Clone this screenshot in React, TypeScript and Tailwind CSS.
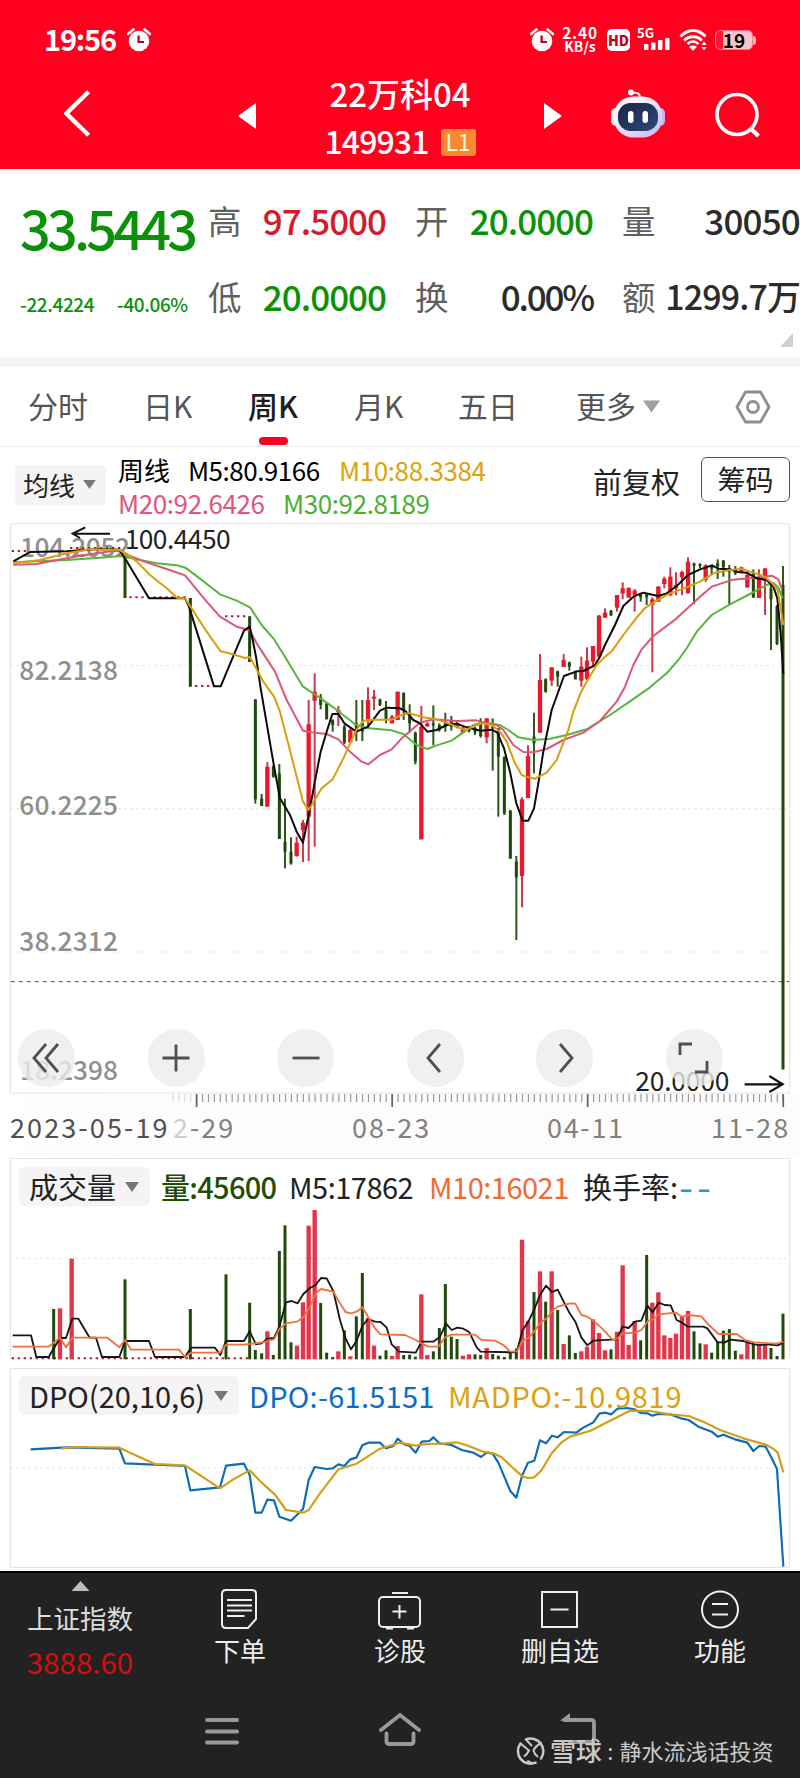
import React from "react";

type Candle = [x: number, high: number, low: number, top: number, bottom: number, up: 0 | 1];
type Bar = [x: number, top: number, up: 0 | 1];

const RED = "#e8182d";
const GREEN = "#1f4a0c";

const candles: Candle[] = [
  [375, 140, 264, 140, 264, 0], [571, 264, 530, 264, 530, 0], [749, 319, 456, 319, 456, 0],
  [766, 568, 881, 568, 868, 0], [785, 852, 888, 866, 888, 0], [802, 756, 890, 770, 890, 1],
  [820, 766, 803, 770, 800, 0], [838, 762, 987, 790, 987, 0], [855, 866, 1075, 995, 1025, 0],
  [873, 982, 1064, 1025, 1060, 0], [890, 980, 1040, 998, 1038, 1], [909, 930, 1056, 938, 960, 1],
  [926, 570, 1053, 643, 920, 1], [944, 490, 1010, 545, 572, 1], [962, 552, 598, 560, 585, 0],
  [980, 580, 628, 580, 628, 0], [998, 628, 665, 630, 645, 0], [1015, 588, 648, 600, 606, 1],
  [1033, 645, 702, 650, 698, 0], [1051, 655, 697, 660, 697, 1], [1069, 570, 693, 640, 665, 0],
  [1087, 570, 693, 640, 665, 0], [1104, 532, 655, 570, 628, 1], [1122, 540, 600, 560, 566, 1],
  [1140, 566, 588, 568, 585, 0], [1158, 573, 640, 600, 630, 0], [1176, 615, 640, 620, 640, 1],
  [1193, 545, 630, 545, 630, 1], [1211, 548, 630, 548, 600, 0], [1229, 583, 668, 610, 640, 0],
  [1246, 665, 763, 668, 755, 0], [1264, 588, 988, 650, 988, 1], [1282, 637, 650, 640, 649, 1],
  [1300, 586, 706, 640, 646, 0], [1318, 640, 665, 645, 660, 0], [1336, 608, 665, 640, 650, 0],
  [1354, 618, 662, 630, 650, 0], [1371, 636, 655, 640, 652, 1], [1389, 650, 668, 655, 668, 1],
  [1407, 648, 667, 650, 664, 0], [1425, 650, 675, 655, 668, 0], [1442, 625, 683, 640, 678, 0],
  [1460, 625, 700, 625, 682, 1], [1478, 625, 782, 650, 655, 0], [1495, 655, 920, 655, 740, 0],
  [1513, 740, 915, 740, 910, 0], [1531, 900, 1046, 902, 1046, 0], [1549, 1038, 1290, 1055, 1102, 0],
  [1566, 862, 1192, 868, 1098, 1], [1584, 706, 864, 738, 864, 1], [1602, 608, 790, 680, 700, 0],
  [1620, 432, 668, 510, 668, 1], [1637, 505, 548, 508, 545, 0], [1655, 472, 528, 472, 512, 1],
  [1673, 482, 530, 484, 500, 0], [1691, 432, 471, 450, 471, 1], [1708, 455, 482, 457, 470, 0],
  [1726, 482, 508, 485, 508, 0], [1744, 440, 530, 470, 512, 1], [1761, 412, 510, 452, 508, 1],
  [1779, 408, 470, 408, 455, 1], [1797, 315, 443, 317, 440, 1], [1815, 295, 323, 308, 323, 1],
  [1833, 300, 318, 302, 316, 0], [1851, 255, 305, 255, 293, 1], [1868, 217, 268, 235, 250, 1],
  [1886, 232, 263, 234, 263, 1], [1904, 237, 305, 242, 255, 1], [1922, 248, 275, 250, 262, 0],
  [1940, 252, 285, 254, 262, 0], [1957, 262, 487, 268, 285, 1], [1975, 228, 275, 230, 275, 1],
  [1993, 200, 235, 206, 222, 1], [2011, 172, 258, 200, 255, 1], [2028, 187, 256, 225, 235, 1],
  [2046, 182, 256, 186, 202, 1], [2064, 142, 250, 155, 250, 1], [2082, 158, 282, 160, 168, 0],
  [2100, 160, 175, 162, 168, 0], [2117, 163, 216, 166, 210, 1], [2135, 165, 192, 166, 176, 0],
  [2153, 148, 207, 160, 170, 0], [2170, 150, 200, 152, 172, 0], [2188, 165, 283, 175, 185, 0],
  [2206, 168, 195, 180, 190, 0], [2224, 170, 190, 172, 184, 1], [2242, 185, 233, 195, 232, 1],
  [2260, 178, 264, 190, 262, 0], [2277, 178, 264, 200, 264, 1], [2295, 175, 315, 175, 212, 1],
  [2313, 225, 420, 235, 268, 0], [2331, 285, 405, 288, 402, 0], [2349, 168, 1678, 225, 1678, 0],
];

const volumes: Bar[] = [
  [161, 477, 0], [180, 475, 1], [215, 326, 1], [375, 388, 0], [571, 477, 0], [678, 373, 0],
  [749, 458, 0], [766, 600, 0], [785, 610, 0], [802, 544, 1], [820, 615, 0], [838, 303, 0],
  [855, 226, 0], [873, 577, 0], [891, 587, 1], [909, 457, 1], [926, 227, 1], [944, 180, 1],
  [962, 459, 0], [980, 608, 0], [998, 621, 0], [1015, 604, 1], [1033, 541, 0], [1051, 619, 1],
  [1069, 499, 0], [1087, 369, 0], [1104, 504, 1], [1122, 587, 1], [1140, 617, 0], [1158, 601, 0],
  [1176, 618, 1], [1193, 588, 1], [1211, 615, 0], [1229, 614, 0], [1246, 620, 0], [1264, 433, 1],
  [1282, 615, 1], [1300, 604, 0], [1318, 534, 0], [1336, 402, 0], [1354, 560, 0], [1371, 567, 0],
  [1389, 617, 1], [1407, 613, 1], [1425, 613, 0], [1442, 615, 0], [1460, 594, 1], [1478, 612, 0],
  [1495, 617, 0], [1513, 621, 0], [1531, 607, 0], [1549, 596, 0], [1566, 269, 1], [1584, 512, 1],
  [1602, 426, 0], [1620, 364, 1], [1637, 455, 0], [1655, 364, 1], [1673, 480, 0], [1691, 582, 1],
  [1708, 556, 0], [1726, 609, 0], [1744, 604, 1], [1761, 590, 1], [1779, 508, 1], [1797, 549, 1],
  [1815, 601, 1], [1833, 598, 0], [1851, 545, 1], [1868, 346, 1], [1886, 585, 1], [1904, 513, 1],
  [1922, 571, 0], [1940, 315, 0], [1957, 458, 1], [1975, 427, 1], [1993, 556, 1], [2011, 564, 1],
  [2028, 551, 1], [2046, 500, 1], [2064, 483, 1], [2082, 544, 0], [2100, 580, 0], [2117, 583, 1],
  [2135, 608, 0], [2153, 575, 0], [2170, 542, 0], [2188, 537, 0], [2206, 602, 0], [2224, 613, 1],
  [2242, 572, 1], [2260, 580, 0], [2277, 585, 1], [2295, 585, 1], [2313, 594, 0], [2331, 618, 0],
  [2349, 491, 0],
];

const ma5 =
  "40,154 90,126 200,124 300,117 358,119 378,150 447,265 555,265 567,290 642,529 662,529 732,362 749,350 757,384 768,440 782,535 800,640 818,745 826,790 840,865 870,915 890,965 909,998 926,915 944,818 962,725 980,665 997,612 1015,611 1033,640 1069,665 1104,650 1140,602 1160,593 1200,595 1218,605 1240,630 1260,640 1282,665 1310,660 1340,645 1370,641 1400,652 1442,662 1475,659 1492,668 1512,715 1530,785 1549,880 1568,932 1585,932 1602,895 1615,820 1630,725 1655,600 1692,498 1730,484 1750,483 1783,467 1800,440 1815,405 1845,345 1870,288 1900,260 1930,248 1975,258 2000,250 2030,228 2064,195 2100,178 2136,166 2155,176 2190,178 2215,186 2240,188 2270,205 2300,210 2320,230 2332,265 2342,370 2350,492";
const ma10 =
  "40,160 120,150 200,130 270,118 358,120 380,132 410,154 450,195 500,235 532,264 555,265 575,295 620,365 662,424 700,433 735,444 749,441 760,460 790,515 822,560 840,605 862,690 890,800 909,875 926,900 944,870 965,835 998,808 1030,745 1069,660 1090,632 1120,629 1175,629 1200,617 1225,609 1270,622 1310,628 1345,640 1375,652 1395,660 1420,650 1445,640 1475,645 1500,665 1520,695 1545,760 1565,795 1585,802 1605,806 1640,788 1670,750 1690,698 1705,660 1720,605 1744,544 1765,507 1790,465 1815,440 1835,424 1870,375 1910,323 1935,294 1970,272 2010,250 2060,232 2100,215 2145,188 2190,180 2225,176 2250,185 2290,198 2315,218 2333,240 2350,345";
const ma20 =
  "40,164 110,162 160,152 240,137 320,125 360,122 390,138 440,157 500,177 555,196 620,275 660,320 710,350 749,361 770,400 825,485 860,570 909,662 935,667 980,672 1015,688 1050,725 1085,755 1105,763 1140,735 1175,718 1205,685 1260,638 1300,628 1370,633 1430,631 1460,640 1490,645 1510,660 1540,705 1570,726 1600,727 1640,717 1690,690 1750,668 1800,633 1850,575 1875,530 1900,465 1925,418 1960,378 2030,325 2100,260 2135,230 2200,209 2280,202 2315,197 2335,208 2345,235";
const ma30 =
  "40,157 200,150 300,143 362,138 420,150 470,160 530,166 556,173 600,206 660,253 710,272 750,292 785,345 820,385 850,432 909,530 950,557 1000,592 1065,643 1100,654 1140,658 1175,661 1210,672 1250,705 1282,717 1310,706 1355,692 1390,667 1420,645 1450,637 1500,645 1525,660 1555,682 1600,690 1650,686 1700,675 1760,658 1830,615 1890,574 1950,532 2000,490 2035,450 2060,415 2090,365 2135,315 2190,283 2250,252 2300,225 2320,219 2335,232 2348,265";

const vol5 =
  "38,556 93,556 109,621 146,621 180,564 198,564 217,506 235,506 269,563 288,563 306,621 358,621 375,573 447,573 465,621 555,621 573,593 645,593 661,615 678,573 732,573 749,544 768,583 785,580 802,566 822,564 838,530 858,457 875,453 893,460 910,432 930,414 947,405 963,384 980,385 1000,423 1020,510 1037,566 1053,598 1070,572 1087,528 1104,507 1125,515 1142,516 1160,533 1175,583 1197,605 1247,608 1265,575 1300,575 1320,560 1338,521 1355,540 1372,533 1390,536 1408,547 1430,592 1442,605 1550,607 1568,540 1585,515 1602,480 1620,435 1638,407 1656,426 1673,419 1691,455 1708,488 1726,515 1744,562 1762,586 1780,572 1850,568 1868,530 1886,534 1904,515 1924,512 1942,467 1958,487 1976,458 1994,465 2012,466 2030,510 2046,518 2064,530 2110,530 2122,535 2153,577 2175,577 2190,569 2230,573 2262,583 2280,585 2300,583 2333,586 2350,578";
const vol10 =
  "38,590 146,590 180,563 198,592 217,563 322,563 358,592 375,570 393,599 537,599 555,621 573,608 660,608 678,584 732,584 790,577 810,570 822,568 838,537 858,520 893,514 910,502 930,470 947,430 963,417 1000,425 1020,460 1037,486 1053,490 1070,485 1087,472 1104,500 1125,535 1142,553 1215,555 1247,570 1265,580 1285,590 1315,590 1335,562 1355,554 1425,554 1445,570 1485,572 1510,585 1530,604 1550,605 1568,572 1585,565 1602,545 1620,520 1640,505 1656,484 1673,470 1710,460 1726,461 1744,495 1762,500 1780,512 1800,530 1818,548 1838,570 1852,565 1868,550 1904,548 1924,540 1945,512 1960,508 1976,493 2028,488 2046,500 2064,495 2104,499 2122,520 2155,552 2210,552 2235,570 2262,577 2330,581 2350,575";

const dpo =
  "92,898 200,892 358,896 375,940 555,948 571,1021 660,1012 678,947 732,941 749,975 766,1088 785,1088 802,1049 822,1051 838,1100 873,1112 909,1077 926,990 944,951 980,957 998,955 1015,943 1033,948 1051,928 1069,923 1087,886 1105,878 1140,878 1158,895 1180,888 1193,866 1212,883 1229,888 1247,908 1265,875 1288,873 1300,862 1318,880 1355,885 1385,900 1420,908 1443,921 1460,908 1478,911 1495,938 1531,1023 1549,1043 1566,978 1584,938 1603,932 1620,871 1638,880 1656,857 1673,862 1692,846 1729,848 1750,833 1780,817 1798,791 1815,788 1834,793 1852,776 1880,774 1904,778 1922,789 1942,790 1957,797 1975,792 2010,793 2046,806 2066,810 2095,830 2135,845 2153,860 2170,854 2205,868 2242,878 2260,903 2278,888 2297,890 2313,920 2331,957 2350,1250";
const madpo =
  "182,896 220,891 358,893 400,913 465,942 555,946 610,982 660,1015 700,988 749,961 785,998 825,1034 858,1080 909,1088 926,1080 960,1030 1015,958 1070,941 1140,896 1200,878 1247,887 1280,882 1330,881 1370,877 1400,886 1450,905 1480,910 1505,922 1540,955 1568,980 1584,984 1603,982 1625,960 1655,910 1685,877 1710,860 1770,843 1830,812 1890,782 1950,783 2010,793 2066,798 2110,815 2160,840 2230,865 2300,885 2318,895 2333,908 2350,967";

const Line = ({ points, color, width = 6 }: { points: string; color: string; width?: number }) => (
  <polyline points={points} fill="none" stroke={color} strokeWidth={width} strokeLinejoin="round" />
);

const GridLine = ({ y }: { y: number }) => (
  <line x1={32} x2={2368} y1={y} y2={y} stroke="#d8d8d8" strokeWidth={3} strokeDasharray="5 13" />
);

const Dots = ({ x1, x2, y }: { x1: number; x2: number; y: number }) => (
  <line x1={x1} x2={x2} y1={y} y2={y} stroke="#b31d33" strokeWidth={6} strokeDasharray="7 11" />
);

const ChartText = ({ x, y, w, fill = "#8f8f8f", weight = 500, children }: { x: number; y: number; w: number; fill?: string; weight?: number; children: string }) => (
  <text x={x} y={y} textLength={w} fill={fill} fontSize={79} fontWeight={weight}>{children}</text>
);

const Caret = ({ className }: { className: string }) => (
  <svg viewBox="0 0 14 10" className={className} fill="currentColor"><path d="M0 0h14L7 10z" /></svg>
);

function AlarmIcon({ className }: { className: string }) {
  return (
    <svg viewBox="0 0 24 24" className={className}>
      <circle cx="12" cy="13" r="10.3" fill="#fff" />
      <path d="M1 6 6.500 1.500M23 6 17.500 1.500" stroke="#fff" strokeWidth="2.600" strokeLinecap="round" />
      <path d="M11.600 7.500v6.500h5.400" fill="none" stroke="#b3001b" strokeWidth="2.200" />
    </svg>
  );
}

function Header() {
  return (
    <header className="h-[169px] bg-[#ff001e] text-white">
      <div className="flex h-20 items-center pl-[44px] pr-[44px]">
        <span className="mt-[-3px] text-[29px] font-bold leading-none tracking-[-1.2px]">19:56</span>
        <AlarmIcon className="ml-[11px] h-6 w-6" />
        <span className="grow" />
        <AlarmIcon className="h-6 w-6" />
        <div className="ml-[7px] mt-[-2px] w-[38px] text-center font-bold">
          <div className="text-[15.5px] leading-[14px] tracking-[0.8px]">2.40</div>
          <div className="text-[14px] leading-[14px]">KB/s</div>
        </div>
        <span className="ml-[8px] flex h-[22px] w-[23px] items-center justify-center rounded-[5px] bg-white pb-px text-[14px] font-black leading-none text-[#c4001a]">HD</span>
        <div className="ml-[7px] flex h-[26px] w-[34px] flex-col">
          <span className="text-[13px] font-bold leading-[11px]">5G</span>
          <svg viewBox="0 0 34 15" className="h-[15px] w-[34px]" fill="#fff">
            <rect x="7" y="6" width="4.500" height="6" rx="1" /><rect x="14" y="4.500" width="4.500" height="7.500" rx="1" />
            <rect x="21" y="2" width="4.500" height="10" rx="1" /><rect x="28" y="0" width="4.500" height="12" rx="1" />
          </svg>
        </div>
        <svg viewBox="0 0 30 24" className="ml-[8px] h-6 w-[30px]" fill="none" stroke="#fff" strokeWidth="2.800">
          <path d="M1.500 8.500C9 .5 19 .5 26.500 8.500M5 12.500c5-5 13-5 18 0M8.500 16c3.300-3.200 7.700-3.200 11 0" />
          <path d="M10 18.800c2.600-1.800 5.400-1.800 8 0L14 22.800z" fill="#fff" stroke="none" />
          <path d="m22.500 17 2.500-3.500 2.500 3.500zM22.500 19l2.500 3.500 2.500-3.500z" fill="#fff" stroke="none" />
        </svg>
        <div className="ml-[6px] flex items-center">
          <span className="flex h-[20px] w-[38px] items-center justify-center rounded-[5px] border border-[#ff7486] bg-[linear-gradient(90deg,#ff1838_19%,#ffc3cb_19%)] pb-px text-[19px] font-bold leading-none text-black">19</span>
          <span className="h-[9px] w-[3px] rounded-r bg-[#ffb3bd]" />
        </div>
      </div>
      <div className="flex h-[89px] items-start">
        <svg viewBox="0 0 28 50" className="ml-[64px] mt-[9px] h-[49px] w-[27px]" fill="none" stroke="#fff" strokeWidth="4.500"><path d="M25.500 2.500 2.500 25l23 22.500" /></svg>
        <svg viewBox="0 0 18 26" className="ml-[147px] mt-[23px] h-[26px] w-[18px]" fill="#fff"><path d="M18 0v26L0 13z" /></svg>
        <div className="flex w-[288px] flex-col items-center">
          <div className="mt-[-5px] text-[33px] font-medium leading-[36px]">22万科04</div>
          <div className="mt-[11px] flex items-center">
            <span className="text-[32px] font-medium leading-[36px] tracking-[-0.9px]">149931</span>
            <span className="ml-[12px] mt-[4px] flex h-[27px] w-[35px] items-center justify-center rounded-[3px] bg-[#f58a33] pb-[2px] text-[23px] leading-none text-[#fff3d8]">L1</span>
          </div>
        </div>
        <svg viewBox="0 0 18 26" className="mt-[23px] h-[26px] w-[18px]" fill="#fff"><path d="M0 0v26l18-13z" /></svg>
        <svg viewBox="0 0 54 50" className="ml-[49px] mt-[9px] h-[50px] w-[54px]">
          <defs>
            <linearGradient id="shell" x1="0" y1="0" x2="1" y2="1"><stop offset="0.3" stopColor="#fdf3fb" /><stop offset="1" stopColor="#c3b2fa" /></linearGradient>
            <linearGradient id="visor" x1="0" y1="0" x2="1" y2="1"><stop offset="0" stopColor="#1b2346" /><stop offset="1" stopColor="#2c4a78" /></linearGradient>
          </defs>
          <path d="M20 4c6-1 9 0 9 5" stroke="#ffe6ee" strokeWidth="2" fill="none" /><circle cx="20" cy="3.500" r="3" fill="#fff" />
          <rect x="0" y="19" width="10" height="18" rx="5" fill="#f3e8fb" /><rect x="44" y="19" width="10" height="18" rx="5" fill="#c9b4f5" />
          <rect x="2.500" y="7.500" width="49" height="41" rx="20" fill="url(#shell)" />
          <rect x="7" y="14" width="40" height="28" rx="12.500" fill="url(#visor)" />
          <rect x="17" y="22" width="5.500" height="12" rx="2.700" fill="#fff" /><rect x="31.500" y="22" width="5.500" height="12" rx="2.700" fill="#fff" />
        </svg>
        <svg viewBox="0 0 46 46" className="ml-[50px] mt-[12px] h-[46px] w-[46px]" fill="none" stroke="#fff" strokeWidth="3.600"><circle cx="22" cy="22.500" r="20" /><path d="m35 36 8.500 8" strokeWidth="4.200" /></svg>
      </div>
    </header>
  );
}

const Label = ({ children }: { children: string }) => <span className="w-[34px] text-[33.5px] font-normal text-[#5f5f5f]">{children}</span>;

function Quote() {
  return (
    <section className="h-[188px] bg-white">
      <div className="flex pl-[20px] leading-none">
        <div className="flex h-[170px] w-[189px] flex-col text-[#0b9108]">
          <div className="mt-[30px] text-[54px] font-medium leading-[56px] tracking-[-3.8px]">33.5443</div>
          <div className="mt-[38px] flex text-[19px] font-medium leading-[22px] tracking-[-0.4px]">
            <span className="w-[97px]">-22.4224</span><span>-40.06%</span>
          </div>
        </div>
        <div className="flex flex-col pt-[25px]">
          <div className="flex h-[51px] items-center font-medium">
            <Label>高</Label><span className="w-[144px] text-right text-[35px] tracking-[-1px] text-[#d51a2c]">97.5000</span>
            <span className="w-[29px]" />
            <Label>开</Label><span className="w-[144px] text-right text-[35px] tracking-[-1px] text-[#0b9108]">20.0000</span>
            <span className="w-[29px]" />
            <Label>量</Label><span className="w-[144px] text-right text-[35px] tracking-[-0.8px] text-[#2b2b2b]">30050</span>
          </div>
          <div className="mt-[25px] flex h-[51px] items-center font-medium">
            <Label>低</Label><span className="w-[144px] text-right text-[35px] tracking-[-1px] text-[#0b9108]">20.0000</span>
            <span className="w-[29px]" />
            <Label>换</Label><span className="w-[144px] text-right text-[35px] tracking-[-2.2px] text-[#2b2b2b]">0.00%</span>
            <span className="w-[29px]" />
            <Label>额</Label><span className="w-[144px] whitespace-nowrap text-right text-[34px] tracking-[-0.9px] text-[#2b2b2b]">1299.7万</span>
          </div>
        </div>
      </div>
      <svg viewBox="0 0 13 14" className="ml-auto mr-[7px] mt-[-6px] h-[14px] w-[13px]" fill="#cfcfcf"><path d="M13 0v14H0z" /></svg>
    </section>
  );
}

function Tabs() {
  return (
    <nav className="flex h-[80px] items-center border-b border-[#ececec] bg-white pl-[28px] text-[30px] leading-none text-[#555]">
      <span className="mt-[-3px] w-[115px]">分时</span>
      <span className="mt-[-3px] w-[105px]">日K</span>
      <span className="relative mt-[-3px] w-[106px] font-medium text-[#1e1e1e]">
        周K<i className="absolute left-[11px] top-[47px] h-[8px] w-[29px] rounded-[4px] bg-[#f5041f]" />
      </span>
      <span className="mt-[-3px] w-[104px]">月K</span>
      <span className="mt-[-3px] w-[118px]">五日</span>
      <span className="mt-[-3px]">更多</span>
      <Caret className="ml-[7px] h-[13px] w-[17px] text-[#a0a0a0]" />
      <svg viewBox="0 0 36 34" className="ml-[75px] h-[34px] w-[36px]" fill="none" stroke="#8e8e8e" strokeWidth="2.800"><path d="M10.500 2h15L34 17l-8.500 15h-15L2 17z" strokeLinejoin="round" /><circle cx="18" cy="17" r="5.500" /></svg>
    </nav>
  );
}

function Averages() {
  return (
    <section className="flex h-[76px] bg-white text-[25px] leading-none text-[#222]">
      <div className="ml-[15px] mt-[18px] flex h-[40px] w-[91px] items-center rounded-[5px] bg-[#f6f3f4] pb-px pl-[8px] text-[26px]">
        均线<Caret className="ml-[8px] h-[9px] w-[13px] text-[#777]" />
      </div>
      <div className="ml-[12px] mt-[6px] w-[475px] text-[26px] leading-[34px]">
        <div className="flex whitespace-nowrap">
          <span className="w-[70px] text-black">周线</span>
          <span className="w-[151px] tracking-[-0.5px] text-black">M5:80.9166</span>
          <span className="tracking-[-0.4px] text-[#dda20c]">M10:88.3384</span>
        </div>
        <div className="mt-[-1px] flex whitespace-nowrap">
          <span className="w-[165px] tracking-[-0.4px] text-[#e2557a]">M20:92.6426</span>
          <span className="tracking-[-0.4px] text-[#4caf32]">M30:92.8189</span>
        </div>
      </div>
      <span className="mt-[20px] w-[108px] text-[29px]">前复权</span>
      <span className="mt-[10px] flex h-[45px] w-[89px] items-center justify-center rounded-[6px] border-[1.5px] border-[#555] pb-[2px] text-[28px]">筹码</span>
    </section>
  );
}

const CONTROLS = [
  "M-1-14l-12 14 12 14M11-14-1 0l12 14",
  "M-13.500 0h27M0-13.500v27",
  "M-13.500 0h27",
  "M5-14-7 0 5 14",
  "M-5-14 7 0-5 14",
  "M-14-3v-11h12M1 14h12v-11",
];

function PriceChart() {
  return (
    <section className="relative h-[571px] bg-white">
      <svg viewBox="0 39 2400 1713" className="absolute inset-0 h-[571px] w-[800px]">
        <rect x={31} y={41} width={2338} height={1708} fill="none" stroke="#e4e4e4" strokeWidth={3} />
        <GridLine y={467} /><GridLine y={896} /><GridLine y={1326} />
        <line x1={32} x2={2368} y1={1415} y2={1415} stroke="#77714e" strokeWidth={3.5} strokeDasharray="12 12" />
        <ChartText x={60} y={140} w={330}>104.2052</ChartText>
        <ChartText x={58} y={510} w={296}>82.2138</ChartText>
        <ChartText x={58} y={915} w={296}>60.2225</ChartText>
        <ChartText x={58} y={1323} w={296}>38.2312</ChartText>
        <ChartText x={60} y={1709} w={294}>18.2398</ChartText>
        <Dots x1={35} x2={80} y={123} /><Dots x1={210} x2={362} y={114} /><Dots x1={388} x2={560} y={262} />
        <Dots x1={585} x2={642} y={528} /><Dots x1={675} x2={740} y={319} />
        {candles.map(([x, h, l, t, b, up]) => (
          <g key={x}>
            <rect x={x - 3} y={h} width={6} height={l - h} fill={up ? "#cc3a4e" : "#2b5a17"} />
            <rect x={x - (up ? 6.5 : 4.5)} y={t} width={up ? 13 : 9} height={b - t} fill={up ? RED : GREEN} />
          </g>
        ))}
        <Line points={ma30} color="#55b63e" />
        <Line points={ma20} color="#dd5674" />
        <Line points={ma5} color="#0a0a0a" />
        <Line points={ma10} color="#dc9d0c" />
        <path d="M330 71H218M256 52L218 71l22 13" fill="none" stroke="#111" strokeWidth={6} />
        <ChartText x={374} y={117} w={318} fill="#222" weight={400}>100.4450</ChartText>
        <ChartText x={1906} y={1743} w={282} fill="#222" weight={400}>20.0000</ChartText>
        <path d="M2234 1723h112M2308 1698l40 25-40 23" fill="none" stroke="#111" strokeWidth={6.5} />
      </svg>
      <div className="relative flex gap-[72.6px] pl-[18px] pt-[506px]">
        {CONTROLS.map((d) => (
          <span key={d} className="flex h-[58px] w-[57px] items-center justify-center rounded-full bg-[#ececec]/80">
            <svg viewBox="-20 -20 40 40" className="h-10 w-10" fill="none" stroke="#505050" strokeWidth="2.800"><path d={d} /></svg>
          </span>
        ))}
      </div>
    </section>
  );
}

function TimeAxis() {
  return (
    <section className="h-[64px] bg-[linear-gradient(90deg,#fff_0%,#fdfbfc_15%,#fdfbfc_100%)]">
      <svg viewBox="0 0 800 16" className="block h-4 w-[800px]">
        {Array.from({ length: 104 }, (_, i) => {
          const major = i % 33 === 0;
          const x = 783.2 - i * 5.925;
          return <line key={i} x1={x} x2={x} y1={0} y2={major ? 13 : 8} stroke={major ? "#666" : i > 99 ? "#ddd" : "#999"} strokeWidth={major ? 1.8 : 1.2} />;
        })}
      </svg>
      <div className="mt-[2px] flex pl-[10px] text-[27px] leading-[30px] text-[#808080]">
        <span className="w-[163px] tracking-[2.1px] text-[#505050]">2023-05-19</span>
        <span className="w-[179px] tracking-[2px]"><span className="text-[#d0d0d0]">2</span>-29</span>
        <span className="w-[195px] tracking-[2px]">08-23</span>
        <span className="w-[164px] tracking-[1.7px]">04-11</span>
        <span className="tracking-[2px]">11-28</span>
      </div>
    </section>
  );
}

function VolumeChart() {
  return (
    <section className="relative h-[210px] bg-white">
      <svg viewBox="0 24 2400 630" className="absolute inset-0 h-[210px] w-[800px]">
        <path d="M31 627V25.500h2338V627" fill="none" stroke="#e4e4e4" strokeWidth={3} />
        <GridLine y={325} />
        <Dots x1={35} x2={745} y={625} />
        {volumes.map(([x, t, up]) => (
          <rect key={x} x={x - (up ? 6.5 : 4.5)} y={t} width={up ? 13 : 9} height={628 - t} fill={up ? "#e0354b" : GREEN} />
        ))}
        <Line points={vol5} color="#161616" width={5.5} />
        <Line points={vol10} color="#f1703e" width={5.5} />
      </svg>
      <div className="relative flex items-center pl-[19px] pt-[9px] text-[29px] leading-none">
        <span className="flex h-[39px] w-[131px] items-center rounded-[5px] bg-[#f6f3f4] pl-[10px] text-[#222]">成交量<Caret className="ml-[9px] h-[10px] w-[14px] text-[#777]" /></span>
        <span className="ml-[11px] w-[128px] font-medium tracking-[-0.7px] text-[#1f4d08]">量:45600</span>
        <span className="w-[140px] tracking-[-0.5px] text-[#222]">M5:17862</span>
        <span className="w-[154px] tracking-[-0.5px] text-[#ee6c34]">M10:16021</span>
        <span className="text-[#222]">换手率:</span>
        <span className="ml-px origin-left scale-x-[1.35] font-medium tracking-[3px] text-[#1f9fd0]">--</span>
      </div>
    </section>
  );
}

function OscillatorChart() {
  return (
    <section className="relative h-[203px] bg-white">
      <svg viewBox="0 654 2400 609" className="absolute inset-0 h-[203px] w-[800px]">
        <rect x={31} y={655.5} width={2338} height={597} fill="none" stroke="#e4e4e4" strokeWidth={3} />
        <GridLine y={954} />
        <Line points={dpo} color="#0d6cb8" width={6.5} />
        <Line points={madpo} color="#d59d18" width={6.5} />
      </svg>
      <div className="relative flex items-center whitespace-nowrap pl-[19px] pt-[8px] text-[29px] leading-none">
        <span className="flex h-[39px] w-[220px] items-center rounded-[5px] bg-[#f6f3f4] pl-[10px] text-[#222]"><span className="w-[175px]">DPO(20,10,6)</span><Caret className="ml-[10px] h-[10px] w-[14px] text-[#777]" /></span>
        <span className="ml-[10px] w-[199px] tracking-[0.25px] text-[#0a6cc9]">DPO:-61.5151</span>
        <span className="tracking-[0.75px] text-[#dda011]">MADPO:-10.9819</span>
      </div>
    </section>
  );
}

const NavItem = ({ label, children }: { label: string; children: React.ReactNode }) => (
  <div className="flex w-[160px] flex-col items-center pt-[14px]">
    <svg viewBox="0 0 46 46" className="h-[46px] w-[46px]" fill="none" stroke="#ededed" strokeWidth="2">{children}</svg>
    <span className="mt-[3px] text-[26px] leading-[28px] text-[#ededed]">{label}</span>
  </div>
);

function Footer() {
  return (
    <footer className="relative h-[207px] border-t-2 border-black bg-[#222] leading-none">
      <div className="flex h-[120px]">
        <div className="flex w-[160px] flex-col items-center pt-[8px]">
          <svg viewBox="0 0 18 10" className="h-[10px] w-[19px]" fill="#bdbdbd"><path d="M9 0l9 10H0z" /></svg>
          <span className="mt-[14px] text-[26.5px] leading-[26px] text-[#dcdcdc]">上证指数</span>
          <span className="mt-[15px] text-[29.5px] leading-[30px] text-[#d40d0d]">3888.60</span>
        </div>
        <NavItem label="下单">
          <path d="M9 3h26q4 0 4 4v25l-8 9H9q-4 0-4-4V7q0-4 4-4zM10 13h25M10 18.500h25M10 23.500h25M10 29h17.500" />
        </NavItem>
        <NavItem label="诊股">
          <rect x="2" y="10" width="41" height="30" rx="4" /><path d="M15 6h16M22.500 18v13.500M15.500 24.500h14M9 41.500h7M30 41.500h7" />
        </NavItem>
        <NavItem label="删自选"><path d="M5 5h35v35H5zM13.500 22.500h18" /></NavItem>
        <NavItem label="功能"><circle cx="23" cy="22.500" r="18" /><path d="M15 17h16M15 27.500h16" /></NavItem>
      </div>
      <div className="flex items-start pl-[205px] pt-[20px]">
        <svg viewBox="0 0 34 34" className="h-[34px] w-[34px]" stroke="#999" strokeWidth="4" strokeLinecap="round"><path d="M2 7h30M2 18.500h30M2 29.500h30" /></svg>
        <svg viewBox="0 0 42 34" className="ml-[140px] h-[34px] w-[42px]" fill="none" stroke="#999" strokeWidth="3.800" strokeLinecap="round" strokeLinejoin="round"><path d="M2 17 21 2l19 15M7.500 20.500v8q0 2.500 2.500 2.500h22q2.500 0 2.500-2.500v-8" /></svg>
        <svg viewBox="0 0 38 36" className="ml-[138px] h-[36px] w-[38px]" fill="none" stroke="#999" strokeWidth="3.800"><path d="M4 7h28q3 0 3 3v16q0 3-3 3H9" /><path d="M11 0v9L1 7.500z" fill="#999" stroke="none" /></svg>
      </div>
      <div className="absolute left-[516px] top-[163px] flex items-center text-[22px] text-[#c9c9c9]">
        <svg viewBox="0 0 30 30" className="h-[30px] w-[30px]" fill="none" stroke="#c9c9c9" strokeWidth="2.500" strokeLinecap="round">
          <path d="M10 3.500a12.600 12.600 0 0 1 15 19M19.500 26.700A12.600 12.600 0 0 1 4.500 7.500" />
          <path d="M4.500 7.500 13 14.500q-2 4-4.500 5.500M10 3.500l5.500 6M25 7q-5.500 3-7.500 7.500 1 4 4 6M12 25q4 3 7.500 1.700" strokeWidth="2" />
        </svg>
        <span className="mb-[3px] ml-[4px] text-[26px] font-medium tracking-[-0.3px]">雪球</span>
        <span className="mb-[3px] w-[18px] text-center">:</span>
        <span className="mb-[3px]">静水流浅话投资</span>
      </div>
    </footer>
  );
}

export default function App() {
  return (
    <main className="h-[1778px] w-[800px] overflow-hidden bg-white font-['Noto_Sans_CJK_SC',sans-serif]">
      <Header />
      <Quote />
      <div className="h-[10px] bg-[#f5f5f5]" />
      <Tabs />
      <Averages />
      <PriceChart />
      <TimeAxis />
      <VolumeChart />
      <OscillatorChart />
      <Footer />
    </main>
  );
}
